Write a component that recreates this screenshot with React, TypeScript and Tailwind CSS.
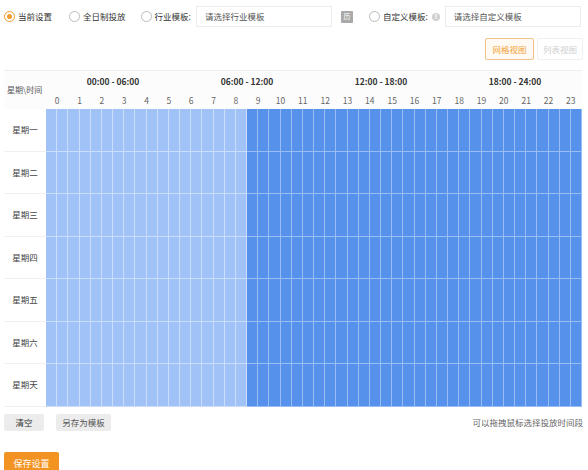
import React from "react";

const days = ["星期一", "星期二", "星期三", "星期四", "星期五", "星期六", "星期天"];
const ranges = ["00:00 - 06:00", "06:00 - 12:00", "12:00 - 18:00", "18:00 - 24:00"];
const hours = Array.from({ length: 24 }, (_, i) => i);
const halves = Array.from({ length: 48 }, (_, i) => i);

function Radio({ checked, label }: { checked?: boolean; label: string }) {
  return (
    <label className="flex shrink-0 items-center gap-[3px] whitespace-nowrap text-[8.5px] text-[#333]">
      {checked ? (
        <span className="flex h-[11px] w-[11px] shrink-0 items-center justify-center rounded-full border border-[#f29a2e] bg-white">
          <span className="h-[5px] w-[5px] rounded-full bg-[#f29a2e]" />
        </span>
      ) : (
        <span className="h-[11px] w-[11px] shrink-0 rounded-full border border-[#bbb] bg-white" />
      )}
      <span>{label}</span>
    </label>
  );
}

export default function App() {
  return (
    <div
      className="h-[470px] w-[588px] overflow-hidden bg-white px-[4px] pt-[6px] text-[#333]"
      style={{ fontFamily: '"Noto Sans CJK SC", "Noto Sans", sans-serif' }}
    >
      {/* top row */}
      <div className="flex h-[21px] items-center whitespace-nowrap">
        <Radio checked label="当前设置" />
        <div className="ml-[17px] shrink-0">
          <Radio label="全日制投放" />
        </div>
        <div className="ml-[15px] shrink-0">
          <Radio label="行业模板:" />
        </div>
        <div className="ml-[5px] flex h-[21px] w-[136px] shrink-0 items-center border border-[#ececec] pl-[8px] text-[8.5px] text-[#555]">
          请选择行业模板
        </div>
        <div className="ml-[9px] flex h-[12px] w-[12px] shrink-0 items-center justify-center rounded-[1px] bg-[#a9a9a9] text-[7px] leading-none text-white">
          历
        </div>
        <div className="ml-[16px] flex shrink-0 items-center">
          <Radio label="自定义模板:" />
          <span className="ml-[4px] flex h-[8px] w-[8px] items-center justify-center rounded-full bg-[#d0d0d0] text-[6px] font-bold leading-none text-white">
            ?
          </span>
        </div>
        <div className="ml-[5px] flex h-[21px] w-[136px] shrink-0 items-center border border-[#ececec] pl-[8px] text-[8.5px] text-[#555]">
          请选择自定义模板
        </div>
      </div>

      {/* view buttons */}
      <div className="mt-[11px] flex justify-end pr-[1px]">
        <div className="flex h-[22px] w-[49px] items-center justify-center rounded-[2px] border border-[#f0c48a] bg-[#fffaf3] text-[8.5px] text-[#f0a238]">
          网格视图
        </div>
        <div className="ml-[3px] flex h-[22px] w-[46px] items-center justify-center rounded-[2px] border border-[#f0f0f0] text-[8.5px] text-[#cfcfcf]">
          列表视图
        </div>
      </div>

      {/* table */}
      <div className="mt-[10px] w-[578px] border-t border-[#eeeeee]">
        <div className="flex h-[38px] bg-[#fcfcfc]">
          <div className="flex w-[42px] items-center whitespace-nowrap pl-[3px] text-[8px] text-[#555]">星期\时间</div>
          <div className="flex-1">
            <div className="grid h-[21px] grid-cols-4 items-center">
              {ranges.map((r) => (
                <div key={r} className="text-center text-[8.5px] font-bold text-[#333]">
                  {r}
                </div>
              ))}
            </div>
            <div className="grid h-[17px] grid-cols-[repeat(24,minmax(0,1fr))] items-center">
              {hours.map((h) => (
                <div key={h} className="text-center text-[8.5px] text-[#666]">
                  {h}
                </div>
              ))}
            </div>
          </div>
        </div>
        {days.map((d) => (
          <div key={d} className="flex h-[42.5px]">
            <div className="flex w-[42px] items-center justify-center border-b border-[#f0f0f0] text-[8.5px] text-[#444]">
              {d}
            </div>
            <div className="grid flex-1 grid-cols-[repeat(48,minmax(0,1fr))]">
              {halves.map((c) => (
                <div
                  key={c}
                  className={
                    c < 18
                      ? "border-b border-r border-[rgba(255,255,255,0.45)] bg-[#a0c2f6]"
                      : "border-b border-r border-[rgba(255,255,255,0.4)] bg-[#5692ec]"
                  }
                />
              ))}
            </div>
          </div>
        ))}
      </div>

      {/* bottom buttons */}
      <div className="mt-[7px] flex h-[17px] w-[579px] items-center">
        <div className="flex h-[17px] w-[40px] items-center justify-center rounded-[2px] bg-[#ececec] text-[8.5px] text-[#333]">
          清空
        </div>
        <div className="ml-[12px] flex h-[17px] w-[55px] items-center justify-center rounded-[2px] bg-[#ececec] text-[8.5px] text-[#555]">
          另存为模板
        </div>
        <div className="ml-auto text-[8.5px] text-[#666]">可以拖拽鼠标选择投放时间段</div>
      </div>

      <div className="mt-[21px] flex h-[24px] w-[55px] items-center justify-center rounded-[2px] bg-[#f39321] text-[9px] text-white">
        保存设置
      </div>
    </div>
  );
}
